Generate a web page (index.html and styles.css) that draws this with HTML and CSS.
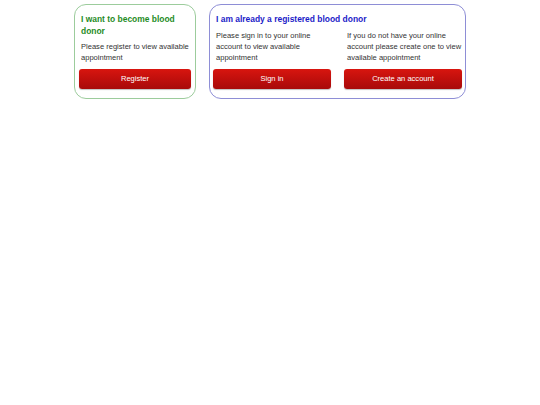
FILE: index.html
```html
<!DOCTYPE html>
<html>
<head>
<meta charset="utf-8">
<link rel="stylesheet" href="styles.css">
</head>
<body>
<div class="wrap">
  <div class="card card-green">
    <div class="col">
      <h2 class="title title-green">I want to become blood donor</h2>
      <p class="text">Please register to view available appointment</p>
      <a class="btn">Register</a>
    </div>
  </div>
  <div class="card card-blue">
    <h2 class="title title-blue">I am already a registered blood donor</h2>
    <div class="cols">
      <div class="col">
        <p class="text">Please sign in to your online account to view available appointment</p>
        <a class="btn">Sign in</a>
      </div>
      <div class="col">
        <p class="text">If you do not have your online account please create one to view available appointment</p>
        <a class="btn">Create an account</a>
      </div>
    </div>
  </div>
</div>
</body>
</html>
```
FILE: styles.css
```css
html, body {
  margin: 0;
  padding: 0;
  background: #fff;
}
body {
  font-family: "Liberation Sans", Arial, sans-serif;
  color: #333;
}
.wrap {
  width: 392px;
  margin: 4px auto 0;
  display: flex;
  gap: 13px;
  align-items: stretch;
}
.card {
  border: 1px solid #8cc88c;
  border-radius: 12px;
  padding: 9px 3px 9px;
  box-sizing: border-box;
  height: 95px;
}
.card-green {
  width: 122px;
  padding-left: 4px;
  padding-right: 4px;
  border-color: #9ccc9c;
}
.card-blue {
  width: 257px;
  border-color: #8e8ed6;
}
.title {
  margin: 0 0 0 3px;
  font-size: 8.45px;
  line-height: 11.5px;
  font-weight: bold;
}
.card-green .title { margin-left: 2px; }
.title-green { color: #1f8c1f; }
.title-blue { color: #1c1cc8; }
.cols {
  display: flex;
  gap: 13px;
}
.cols .col { flex: 1; }
.text {
  margin: 4px 0 6px 3px;
  font-size: 7.55px;
  line-height: 11px;
  color: #333;
}
.card-green .text { margin-left: 2px; }
.card-blue .cols .col .text { height: 33px; }
.btn {
  display: block;
  height: 20px;
  line-height: 20px;
  text-align: center;
  color: #fff;
  font-size: 7.55px;
  border-radius: 3px;
  background: linear-gradient(#d8150f, #a80a0a);
  box-shadow: 0 1px 1px rgba(0,0,0,0.25);
}
```
